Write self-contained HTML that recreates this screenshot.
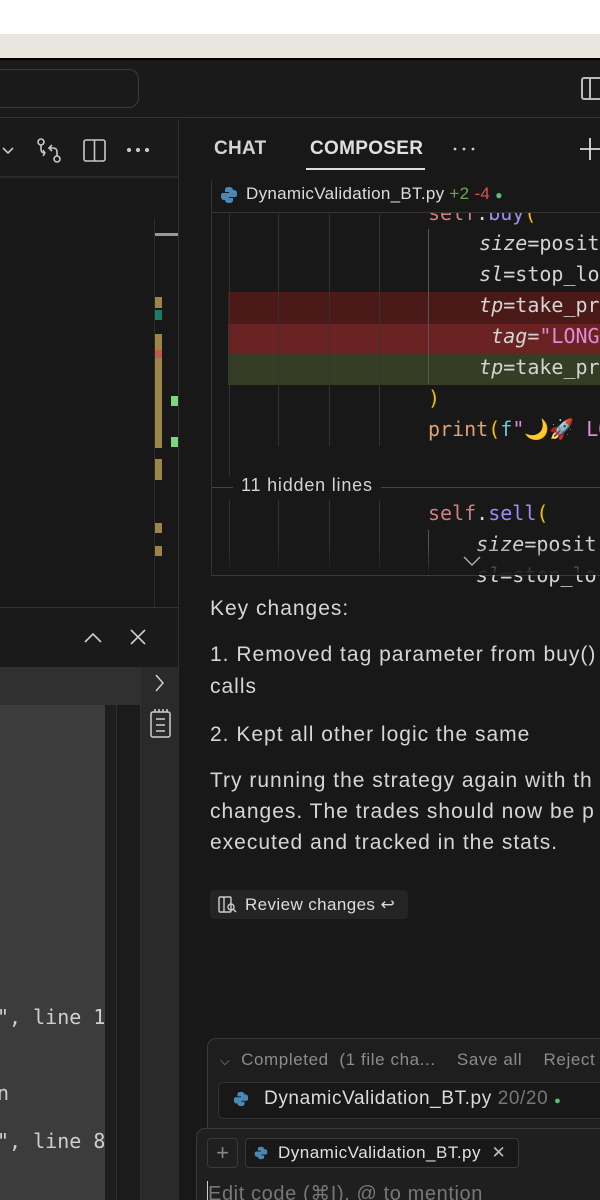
<!DOCTYPE html>
<html><head><meta charset="utf-8"><style>
*{margin:0;padding:0;box-sizing:border-box}
html{width:600px;height:1200px;overflow:hidden}
body{width:600px;height:1200px;overflow:hidden;background:#181818;position:relative;font-family:"Liberation Sans","DejaVu Sans",sans-serif;color:#d4d4d4}
.a{position:absolute}
.mono{font-family:"DejaVu Sans Mono","Liberation Mono",monospace;font-size:20px;white-space:pre}
.t{font-size:21px;letter-spacing:1px;color:#d6d6d6;white-space:nowrap}
.g{position:absolute;width:1px;background:#333}
</style></head><body>
<div class="a" style="left:0;top:0;width:600px;height:34px;background:#fff"></div>
<div class="a" style="left:0;top:34px;width:600px;height:24px;background:#e8e6df"></div>
<div class="a" style="left:0;top:58px;width:600px;height:2px;background:#000"></div>
<div class="a" style="left:0;top:60px;width:600px;height:58px;background:#1a1a1a;border-bottom:1px solid #333"></div>
<div class="a" style="left:-20px;top:69px;width:159px;height:39px;border:1px solid #3a3a3a;border-radius:10px"></div>
<div class="a" style="left:581px;top:77px;width:30px;height:23px;border:2px solid #bbb;border-radius:3px"></div>
<div class="a" style="left:589px;top:77px;width:2px;height:23px;background:#bbb"></div>

<div class="a" style="left:0;top:119px;width:178px;height:59px;background:#1a1a1a;border-bottom:2px solid #2a2a2a"></div>
<svg class="a" style="left:0;top:138px" width="178" height="26" viewBox="0 0 178 26" fill="none" stroke="#c8c8c8" stroke-width="1.6">
<path d="M3 10l5 5 5-5"/>
<circle cx="41" cy="4" r="3"/><circle cx="57" cy="21" r="3"/>
<path d="M41 7v4q0 4 4 4"/><path d="M43 12l2 3-2 3" stroke-width="1.4"/>
<path d="M57 18v-4q0-4-4-4h-3"/><path d="M52 7l-3 3 3 3"/>
<rect x="84" y="2" width="21" height="21" rx="2"/><path d="M94.5 2v21"/>
<circle cx="129" cy="12" r="1.3" fill="#c8c8c8"/><circle cx="138" cy="12" r="1.3" fill="#c8c8c8"/><circle cx="147" cy="12" r="1.3" fill="#c8c8c8"/>
</svg>
<div class="a" style="left:178px;top:119px;width:1px;height:1081px;background:#2e2e2e"></div>

<div class="a" style="left:154px;top:218px;width:1px;height:390px;background:#2c2c2c"></div>
<div class="a" style="left:155px;top:233px;width:23px;height:3px;background:#999"></div>
<div class="a" style="left:155px;top:297px;width:7px;height:11px;background:#9c8547"></div>
<div class="a" style="left:155px;top:310px;width:7px;height:10px;background:#1d7a68"></div>
<div class="a" style="left:155px;top:334px;width:7px;height:114px;background:#9c8547"></div>
<div class="a" style="left:155px;top:350px;width:7px;height:8px;background:#c05a50"></div>
<div class="a" style="left:171px;top:396px;width:7px;height:10px;background:#7dd67d"></div>
<div class="a" style="left:171px;top:437px;width:7px;height:10px;background:#7dd67d"></div>
<div class="a" style="left:155px;top:459px;width:7px;height:21px;background:#9c8547"></div>
<div class="a" style="left:155px;top:523px;width:7px;height:10px;background:#9c8547"></div>
<div class="a" style="left:155px;top:546px;width:7px;height:10px;background:#9c8547"></div>

<div class="a" style="left:0;top:607px;width:178px;height:1px;background:#333"></div>
<div class="a" style="left:0;top:608px;width:178px;height:59px;background:#1a1a1a"></div>
<svg class="a" style="left:80px;top:626px" width="70" height="22" fill="none" stroke="#cfcfcf" stroke-width="1.6"><path d="M5 16l8-8 8 8"/><path d="M51 4l14 14M65 4L51 18"/></svg>
<div class="a" style="left:0;top:667px;width:140px;height:38px;background:#303030"></div>
<div class="a" style="left:0;top:705px;width:105px;height:495px;background:#3c3c3c"></div>
<div class="a" style="left:105px;top:705px;width:11px;height:495px;background:#1e1e1e"></div>
<div class="a" style="left:116px;top:705px;width:24px;height:495px;background:#1b1b1b;border-left:1px solid #2e2e2e"></div>
<div class="a" style="left:140px;top:667px;width:38px;height:533px;background:#2a2a2a;border-left:1px solid #333"></div>
<svg class="a" style="left:148px;top:672px" width="24" height="72" fill="none" stroke="#cfcfcf" stroke-width="1.5"><path d="M8 3l7 8-7 8"/><rect x="3" y="40" width="19" height="25" rx="2"/><path d="M7 37v3M11 37v3M15 37v3M19 37v3M8 47h9M8 53h9M8 59h9"/></svg>
<div class="a mono" style="left:-3px;top:1003px;color:#cfcfcf;line-height:28px">", line 1</div>
<div class="a mono" style="left:-3px;top:1079px;color:#cfcfcf;line-height:28px">n</div>
<div class="a mono" style="left:-3px;top:1127px;color:#cfcfcf;line-height:28px">", line 8</div>

<div class="a" style="left:214px;top:138px;font-size:19px;font-weight:bold;color:#d4d4d4;letter-spacing:0.3px">CHAT</div>
<div class="a" style="left:310px;top:138px;font-size:19px;font-weight:bold;color:#e0e0e0;letter-spacing:0.3px">COMPOSER</div>
<div class="a" style="left:306px;top:168px;width:119px;height:2px;background:#ddd"></div>
<svg class="a" style="left:450px;top:142px" width="30" height="14"><circle cx="5" cy="7" r="1.4" fill="#ccc"/><circle cx="14" cy="7" r="1.4" fill="#ccc"/><circle cx="23" cy="7" r="1.4" fill="#ccc"/></svg>
<svg class="a" style="left:578px;top:136px" width="22" height="26" stroke="#ddd" stroke-width="1.8"><path d="M12 2v22M2 13h22"/></svg>

<div class="a" style="left:211px;top:180px;width:400px;height:396px;border-left:1px solid #333;border-bottom:1px solid #3a3a3a;background:#181818"></div>
<div class="a" style="left:212px;top:180px;width:390px;height:33px;border-bottom:1px solid #333"></div>
<svg class="a" style="left:220px;top:186px" width="18" height="18" viewBox="0 0 18 18"><path d="M9 1C5 1 5 3 5 4v2h4v1H3C1 7 1 9 1 10s0 4 3 4h1v-3c0-1 1-2 2-2h4c1 0 2-1 2-2V4c0-2-2-3-4-3z" fill="#4a88b8"/><path d="M9 17c4 0 4-2 4-3v-2H9v-1h6c2 0 2-2 2-3s0-4-3-4h-1v3c0 1-1 2-2 2H7c-1 0-2 1-2 2v3c0 2 2 3 4 3z" fill="#4a88b8"/></svg>
<div class="a" style="left:246px;top:184px;font-size:17px;color:#dcdcdc;white-space:nowrap;letter-spacing:0.3px">DynamicValidation_BT.py <span style="color:#6aa84f">+2</span> <span style="color:#e05050">-4</span> <span style="color:#5cbf6d;font-size:12px">●</span></div>

<div class="a" style="left:228px;top:292px;width:372px;height:32px;background:#4b1a18"></div>
<div class="a" style="left:228px;top:324px;width:372px;height:30px;background:#6b2222"></div>
<div class="a" style="left:228px;top:354px;width:372px;height:31px;background:#353d25"></div>
<div class="g" style="left:229px;top:214px;height:262px"></div>
<div class="g" style="left:278px;top:214px;height:232px"></div>
<div class="g" style="left:329px;top:214px;height:232px"></div>
<div class="g" style="left:379px;top:214px;height:232px"></div>
<div class="g" style="left:428px;top:229px;height:155px;background:#555"></div>
<div class="g" style="left:229px;top:500px;height:76px"></div>
<div class="g" style="left:278px;top:500px;height:76px"></div>
<div class="g" style="left:329px;top:500px;height:76px"></div>
<div class="g" style="left:379px;top:500px;height:76px"></div>
<div class="g" style="left:428px;top:530px;height:46px;background:#555"></div>

<div class="a mono" style="left:428px;top:198px;line-height:31px;color:#d4d4d4;clip-path:inset(15px 0 0 0)"><span style="color:#d08080">self</span>.<span style="color:#9a8ef0">buy</span><span style="color:#f0c000">(</span></div>
<div class="a mono" style="left:431px;top:228px;line-height:31px;color:#d4d4d4">    <i>size</i>=posit
    <i>sl</i>=stop_lo
    <i>tp</i>=take_pr
     <i>tag</i>=<span style="color:#e08ad8">"LONG</span>
    <i>tp</i>=take_pr</div>
<div class="a mono" style="left:428px;top:383px;line-height:31px;color:#d4d4d4"><span style="color:#f0c000">)</span>
<span style="color:#e0a070">print</span><span style="color:#f0c000">(</span><span style="color:#6ac8c8">f</span><span style="color:#e08ad8">"🌙🚀 LO</span></div>
<div class="a" style="left:212px;top:487px;width:388px;height:1px;background:#444"></div>
<div class="a" style="left:233px;top:475px;padding:0 8px;background:#181818;font-size:18px;color:#d4d4d4;letter-spacing:0.8px">11 hidden lines</div>
<div class="a mono" style="left:428px;top:498px;line-height:31px;color:#d4d4d4"><span style="color:#d08080">self</span>.<span style="color:#9a8ef0">sell</span><span style="color:#f0c000">(</span>
   <i> size</i>=posit
   <i> sl</i>=stop_lo</div>
<div class="a" style="left:212px;top:545px;width:388px;height:30px;background:linear-gradient(rgba(24,24,24,0),#181818)"></div>
<svg class="a" style="left:462px;top:554px" width="22" height="14" fill="none" stroke="#aaa" stroke-width="1.5"><path d="M2 3l8 8 8-8"/></svg>

<div class="a t" style="left:210px;top:597px">Key changes:</div>
<div class="a t" style="left:210px;top:643px">1. Removed tag parameter from buy()</div>
<div class="a t" style="left:210px;top:675px">calls</div>
<div class="a t" style="left:210px;top:723px">2. Kept all other logic the same</div>
<div class="a t" style="left:210px;top:769px">Try running the strategy again with th</div>
<div class="a t" style="left:210px;top:800px">changes. The trades should now be p</div>
<div class="a t" style="left:210px;top:831px">executed and tracked in the stats.</div>
<div class="a" style="left:210px;top:890px;width:198px;height:29px;background:#242424;border-radius:4px"></div>
<svg class="a" style="left:217px;top:895px" width="22" height="20" fill="none" stroke="#ccc" stroke-width="1.4"><rect x="2" y="2" width="12" height="15" rx="1"/><path d="M7 2v15"/><circle cx="14" cy="12" r="3"/><path d="M16 14l3 3"/></svg>
<div class="a" style="left:245px;top:895px;font-size:17px;color:#dcdcdc;white-space:nowrap;letter-spacing:0.4px">Review changes ↩</div>

<div class="a" style="left:207px;top:1038px;width:420px;height:200px;border:1px solid #3a3a3a;border-radius:9px;background:#1e1e1e"></div>
<div class="a" style="left:220px;top:1050px;font-size:17px;color:#8c8c8c;white-space:nowrap;letter-spacing:0.6px"><span style="font-size:13px">⌵</span>&nbsp; Completed &nbsp;(1 file cha...&nbsp;&nbsp;&nbsp; Save all&nbsp;&nbsp;&nbsp; Reject a</div>
<div class="a" style="left:218px;top:1082px;width:400px;height:37px;border:1px solid #333;border-radius:5px;background:#181818"></div>
<svg class="a" style="left:233px;top:1091px" width="16" height="16" viewBox="0 0 18 18"><path d="M9 1C5 1 5 3 5 4v2h4v1H3C1 7 1 9 1 10s0 4 3 4h1v-3c0-1 1-2 2-2h4c1 0 2-1 2-2V4c0-2-2-3-4-3z" fill="#4a88b8"/><path d="M9 17c4 0 4-2 4-3v-2H9v-1h6c2 0 2-2 2-3s0-4-3-4h-1v3c0 1-1 2-2 2H7c-1 0-2 1-2 2v3c0 2 2 3 4 3z" fill="#4a88b8"/></svg>
<div class="a" style="left:264px;top:1088px;font-size:19px;color:#dcdcdc;white-space:nowrap;letter-spacing:0.6px">DynamicValidation_BT.py <span style="color:#777">20/20</span> <span style="color:#5cbf6d;font-size:11px">●</span></div>

<div class="a" style="left:196px;top:1128px;width:430px;height:100px;border:1px solid #3a3a3a;border-radius:9px;background:#1f1f1f"></div>
<div class="a" style="left:207px;top:1138px;width:31px;height:30px;border:1px solid #3a3a3a;border-radius:4px;color:#888;font-size:22px;text-align:center;line-height:27px">+</div>
<div class="a" style="left:245px;top:1138px;width:274px;height:30px;border:1px solid #3a3a3a;border-radius:4px;background:#181818"></div>
<svg class="a" style="left:254px;top:1146px" width="14" height="14" viewBox="0 0 18 18"><path d="M9 1C5 1 5 3 5 4v2h4v1H3C1 7 1 9 1 10s0 4 3 4h1v-3c0-1 1-2 2-2h4c1 0 2-1 2-2V4c0-2-2-3-4-3z" fill="#4a88b8"/><path d="M9 17c4 0 4-2 4-3v-2H9v-1h6c2 0 2-2 2-3s0-4-3-4h-1v3c0 1-1 2-2 2H7c-1 0-2 1-2 2v3c0 2 2 3 4 3z" fill="#4a88b8"/></svg>
<div class="a" style="left:278px;top:1143px;font-size:17px;color:#e0e0e0;white-space:nowrap;letter-spacing:0.5px">DynamicValidation_BT.py &nbsp;<span style="color:#bbb">✕</span></div>
<div class="a" style="left:207px;top:1181px;width:1px;height:22px;background:#ccc"></div>
<div class="a" style="left:208px;top:1181px;font-size:20px;color:#777;white-space:nowrap;letter-spacing:0.6px">Edit code (⌘I), @ to mention</div>
</body></html>
